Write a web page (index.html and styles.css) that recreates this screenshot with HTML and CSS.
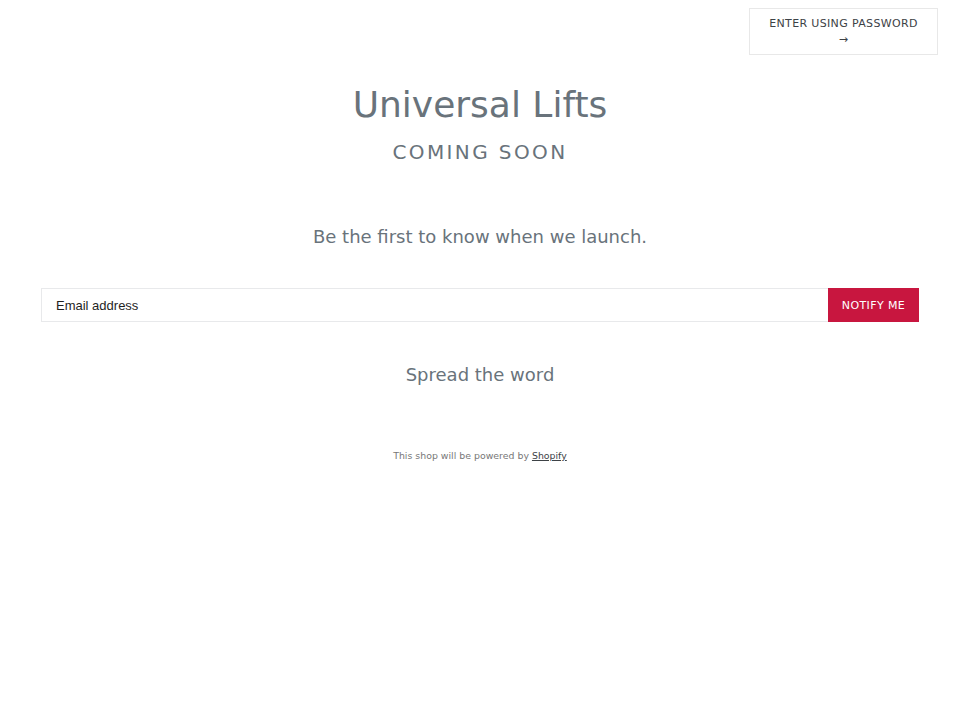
FILE: index.html
```html
<!DOCTYPE html>
<html lang="en">
<head>
<meta charset="UTF-8">
<meta name="viewport" content="width=device-width, initial-scale=1.0">
<title>Universal Lifts</title>
<link rel="stylesheet" href="styles.css">
</head>
<body>
<div class="topbar">
  <a class="password-link" href="#">ENTER USING PASSWORD<br>&rarr;</a>
</div>

<div class="hero">
  <h1>Universal Lifts</h1>
  <h2>COMING SOON</h2>
</div>

<div class="signup">
  <p class="lead">Be the first to know when we launch.</p>
  <form class="notify-form">
    <input type="email" placeholder="Email address">
    <button type="submit">NOTIFY ME</button>
  </form>
</div>

<div class="share">
  <h3>Spread the word</h3>
</div>

<div class="footer">
  This shop will be powered by <a href="#">Shopify</a>
</div>
</body>
</html>
```

FILE: styles.css
```css
body { margin: 0; font-family: "DejaVu Sans", sans-serif; background: #fff; color: #69737b; }
.topbar { display: flex; justify-content: flex-end; padding: 8px 22px 0 0; }
.password-link { display: block; width: 189px; box-sizing: border-box; border: 1px solid #e8e8e8; padding: 7px 0 6px; text-align: center; font-size: 11px; letter-spacing: 0.35px; line-height: 16px; color: #3d4246; text-decoration: none; }
.hero { text-align: center; margin-top: 28px; }
.hero h1 { margin: 0; font-size: 36px; font-weight: normal; line-height: 44px; color: #69737b; }
.hero h2 { margin: 12px 0 0; font-size: 20px; font-weight: normal; letter-spacing: 2.4px; line-height: 26px; color: #69737b; }
.signup { text-align: center; margin-top: 60px; }
.lead { margin: 0; font-size: 18px; line-height: 24px; color: #69737b; }
.notify-form { display: flex; margin: 39px 41px 0; }
.notify-form input { flex: 1; height: 34px; box-sizing: border-box; border: 1px solid #e8e9eb; border-right: none; padding: 0 14px; font-family: "Liberation Sans", Arial, sans-serif; font-size: 13px; color: #3d4246; }
.notify-form input::placeholder { color: #1f1f1f; }
.notify-form button { width: 91px; height: 34px; border: none; background: #c8163f; color: #fff; font-family: "DejaVu Sans", sans-serif; font-size: 11px; letter-spacing: 0.4px; cursor: pointer; }
.share { text-align: center; margin-top: 41px; }
.share h3 { margin: 0; font-size: 18px; font-weight: normal; line-height: 24px; color: #69737b; }
.footer { text-align: center; margin-top: 63px; font-size: 9.4px; color: #777; }
.footer a { color: #3d4246; }
```
